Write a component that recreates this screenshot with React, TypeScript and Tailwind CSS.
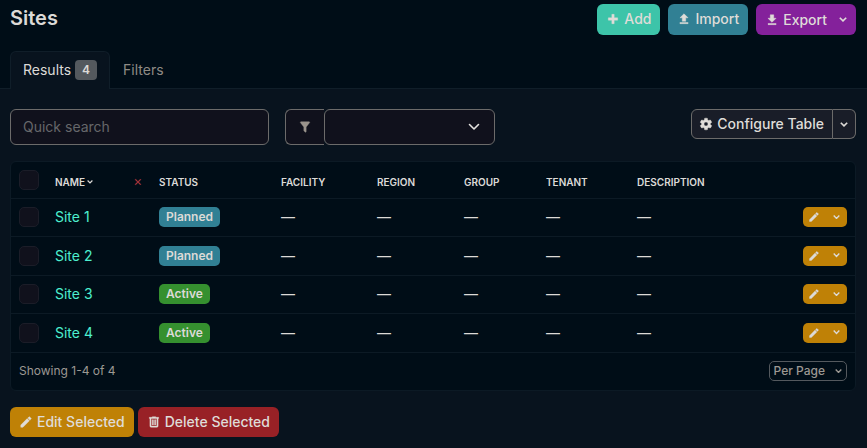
import type { ReactNode } from "react";

const icons = {
  plus: "M20 14H14V20H10V14H4V10H10V4H14V10H20V14Z",
  upload: "M9,16V10H5L12,3L19,10H15V16H9M5,20V18H19V20H5Z",
  download: "M5,20H19V18H5M19,9H15V3H9V9H5L12,16L19,9Z",
  cog: "M12,15.5A3.5,3.5 0 0,1 8.5,12A3.5,3.5 0 0,1 12,8.5A3.5,3.5 0 0,1 15.5,12A3.5,3.5 0 0,1 12,15.5M19.43,12.97C19.47,12.65 19.5,12.33 19.5,12C19.5,11.67 19.47,11.34 19.43,11L21.54,9.37C21.73,9.22 21.78,8.95 21.66,8.73L19.66,5.27C19.54,5.05 19.27,4.96 19.05,5.05L16.56,6.05C16.04,5.66 15.5,5.32 14.87,5.07L14.5,2.42C14.46,2.18 14.25,2 14,2H10C9.75,2 9.54,2.18 9.5,2.42L9.13,5.07C8.5,5.32 7.96,5.66 7.44,6.05L4.95,5.05C4.73,4.96 4.46,5.05 4.34,5.27L2.34,8.73C2.21,8.95 2.27,9.22 2.46,9.37L4.57,11C4.53,11.34 4.5,11.67 4.5,12C4.5,12.33 4.53,12.65 4.57,12.97L2.46,14.63C2.27,14.78 2.21,15.05 2.34,15.27L4.34,18.73C4.46,18.95 4.73,19.03 4.95,18.95L7.44,17.94C7.96,18.34 8.5,18.68 9.13,18.93L9.5,21.58C9.54,21.82 9.75,22 10,22H14C14.25,22 14.46,21.82 14.5,21.58L14.87,18.93C15.5,18.67 16.04,18.34 16.56,17.94L19.05,18.95C19.27,19.03 19.54,18.95 19.66,18.73L21.66,15.27C21.78,15.05 21.73,14.78 21.54,14.63L19.43,12.97Z",
  filter: "M14,12V19.88C14.04,20.18 13.94,20.5 13.71,20.71C13.32,21.1 12.69,21.1 12.3,20.71L10.29,18.7C10.06,18.47 9.96,18.16 10,17.87V12H9.97L4.21,4.62C3.87,4.19 3.95,3.56 4.38,3.22C4.57,3.08 4.78,3 5,3H19C19.22,3 19.43,3.08 19.62,3.22C20.05,3.56 20.13,4.19 19.79,4.62L14.03,12H14Z",
  pencil: "M20.71,7.04C21.1,6.65 21.1,6 20.71,5.63L18.37,3.29C18,2.9 17.35,2.9 16.96,3.29L15.12,5.12L18.87,8.87M3,17.25V21H6.75L17.81,9.93L14.06,6.18L3,17.25Z",
  trash: "M9,3V4H4V6H5V19A2,2 0 0,0 7,21H17A2,2 0 0,0 19,19V6H20V4H15V3H9M7,6H17V19H7V6M9,8V17H11V8H9M13,8V17H15V8H13Z",
  close: "M19,6.41L17.59,5L12,10.59L6.41,5L5,6.41L10.59,12L5,17.59L6.41,19L12,13.41L17.59,19L19,17.59L13.41,12L19,6.41Z",
};

function Icon({ name, className = "size-[14px]" }: { name: keyof typeof icons; className?: string }) {
  return (
    <svg
      viewBox="0 0 24 24"
      fill="currentColor"
      stroke="currentColor"
      strokeWidth="0.7"
      aria-hidden="true"
      className={`shrink-0 ${className}`}
    >
      <path d={icons[name]} />
    </svg>
  );
}

function Caret({ className = "w-2" }: { className?: string }) {
  return (
    <svg viewBox="0 0 8 5" fill="none" stroke="currentColor" strokeWidth="1.6" aria-hidden="true" className={`shrink-0 ${className}`}>
      <path d="M0.8 0.7 4 3.9 7.2 0.7" />
    </svg>
  );
}

function Button({ className, children }: { className: string; children: ReactNode }) {
  return (
    <button type="button" className={`flex items-center gap-1 font-medium text-[#dfdcd8] ${className}`}>
      {children}
    </button>
  );
}

function Check({ label }: { label: string }) {
  return (
    <input
      type="checkbox"
      aria-label={label}
      className="block size-5 appearance-none rounded-[5px] border border-[#1b1d28] bg-[#10111c] checked:bg-[#3f8090]"
    />
  );
}

const sites = [
  { name: "Site 1", status: "Planned" },
  { name: "Site 2", status: "Planned" },
  { name: "Site 3", status: "Active" },
  { name: "Site 4", status: "Active" },
];

const columns = ["Facility", "Region", "Group", "Tenant", "Description"];

export default function App() {
  return (
    <div className="min-h-screen bg-[#08131e] font-['Inter',sans-serif] text-sm text-[#dcdad7]">
      <header className="border-b border-[#101e29] bg-[#000d17] pt-1 pr-[11px] pl-2.5">
        <div className="flex items-start justify-between">
          <h1 className="text-xl leading-7 font-semibold">Sites</h1>
          <div className="flex gap-2">
            <Button className="h-[31px] rounded-md bg-[#3dc4a9] px-[9px] pb-px">
              <Icon name="plus" />
              Add
            </Button>
            <Button className="h-[31px] rounded-md bg-[#318094] px-[9px] pb-px">
              <Icon name="upload" />
              Import
            </Button>
            <Button className="h-[31px] rounded-md bg-[#84219b] px-[9px]">
              <Icon name="download" />
              Export
              <Caret className="ml-2 w-2" />
            </Button>
          </div>
        </div>
        <nav className="mt-4 -mb-px flex">
          <a href="#results" className="flex h-[38px] items-center gap-1 rounded-t-md border border-b-0 border-[#101e29] bg-[#08131e] px-3 pb-px">
            Results
            <span className="flex h-5 items-center rounded bg-[#54595e] px-[7px] text-xs font-semibold">4</span>
          </a>
          <a href="#filters" className="flex h-[38px] items-center px-[13px] text-[#8f8b85]">
            Filters
          </a>
        </nav>
      </header>

      <main className="pt-5 pr-[11px] pl-2.5">
        <div className="flex items-start">
          <input
            type="search"
            aria-label="Quick search"
            placeholder="Quick search"
            className="h-9 w-[259px] rounded-md border border-[#6c6b6a] bg-[#10111c] px-3 pb-0.5 placeholder:text-[#66676a]"
          />
          <div className="ml-4 flex">
            <span className="flex h-9 w-[39px] items-center justify-center rounded-l-md border border-r-0 border-[#6c6b6a] bg-[#10111c] text-[#9a948c]">
              <Icon name="filter" />
            </span>
            <div className="relative">
              <select
                aria-label="Saved filter"
                className="block h-9 w-[171px] appearance-none rounded-md border border-[#6c6b6a] bg-[#10111c] px-3"
              >
                <option value=""></option>
              </select>
              <svg
                viewBox="0 0 12 8"
                fill="none"
                stroke="#e4e2df"
                strokeWidth="1.6"
                strokeLinecap="round"
                strokeLinejoin="round"
                aria-hidden="true"
                className="pointer-events-none absolute top-3.5 right-[15px] w-3"
              >
                <path d="M1.5 1.5 6 6 10.5 1.5" />
              </svg>
            </div>
          </div>
          <div className="ml-auto flex">
            <Button className="h-[30px] rounded-l-md border border-[#6c6b6a] bg-[#191d28] pr-2 pl-[7px]">
              <Icon name="cog" />
              Configure Table
            </Button>
            <button
              type="button"
              aria-label="Table configurations"
              className="flex h-[30px] w-[23px] items-center justify-center rounded-r-md border border-l-0 border-[#6c6b6a] bg-[#191d28]"
            >
              <Caret />
            </button>
          </div>
        </div>

        <section className="mt-4 rounded-md border border-[#0c1a25] bg-[#000d17]">
          <table className="w-full table-fixed text-left">
            <colgroup>
              <col className="w-9" />
              <col className="w-[104px]" />
              <col className="w-[122px]" />
              <col className="w-24" />
              <col className="w-[87px]" />
              <col className="w-[82px]" />
              <col className="w-[91px]" />
              <col />
              <col className="w-[60px]" />
            </colgroup>
            <thead>
              <tr className="h-9 border-b border-[#0c1a25] text-[10px] uppercase">
                <th className="px-2">
                  <Check label="Select all" />
                </th>
                <th className="px-2 pt-1 font-semibold">
                  <div className="flex items-center gap-0.5">
                    Name
                    <Caret className="w-1.5" />
                    <button type="button" aria-label="Clear ordering" className="ml-auto text-[#b8383f]">
                      <Icon name="close" className="size-[10px]" />
                    </button>
                  </div>
                </th>
                <th className="px-2 pt-1 font-semibold">Status</th>
                {columns.map((column) => (
                  <th key={column} className="px-2 pt-1 font-semibold">
                    {column}
                  </th>
                ))}
                <th aria-label="Actions" />
              </tr>
            </thead>
            <tbody>
              {sites.map((site) => (
                <tr key={site.name} className="h-[38px] border-b border-[#0c1a25] even:h-[39px]">
                  <td className="px-2">
                    <Check label={`Select ${site.name}`} />
                  </td>
                  <td className="px-2">
                    <a href="#site" className="text-[#4defcf]">
                      {site.name}
                    </a>
                  </td>
                  <td className="px-2">
                    <span
                      className={`flex h-5 w-fit items-center rounded-[5px] px-[7px] text-xs font-semibold ${
                        site.status === "Active" ? "bg-[#35902f]" : "bg-[#318094]"
                      }`}
                    >
                      {site.status}
                    </span>
                  </td>
                  {columns.map((column) => (
                    <td key={column} className="px-2">
                      —
                    </td>
                  ))}
                  <td className="px-2">
                    <div className="flex h-5 overflow-hidden rounded-[5px] bg-[#bf8106]">
                      <button type="button" aria-label={`Edit ${site.name}`} className="flex w-[22px] items-center justify-center">
                        <Icon name="pencil" className="size-3" />
                      </button>
                      <button type="button" aria-label={`More actions for ${site.name}`} className="flex flex-1 items-center justify-center">
                        <Caret className="w-[7px]" />
                      </button>
                    </div>
                  </td>
                </tr>
              ))}
            </tbody>
          </table>
          <div className="flex h-[37px] items-center justify-between px-2 text-xs text-[#9c9893]">
            <span>Showing 1-4 of 4</span>
            <button type="button" className="flex h-5 items-center gap-2.5 rounded-[5px] border border-[#54595e] px-1 font-medium">
              Per Page
              <Caret className="w-[7px]" />
            </button>
          </div>
        </section>

        <div className="mt-4 flex gap-1">
          <Button className="h-[30px] rounded-md bg-[#bf8106] px-[9px]">
            <Icon name="pencil" />
            Edit Selected
          </Button>
          <Button className="h-[30px] rounded-md bg-[#982126] px-[9px]">
            <Icon name="trash" />
            Delete Selected
          </Button>
        </div>
      </main>
    </div>
  );
}
